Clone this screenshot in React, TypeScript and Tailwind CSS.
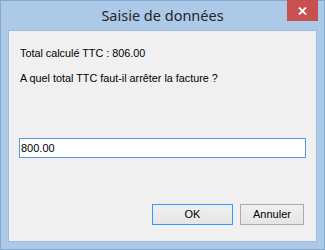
export default function App() {
  return (
    <div className="w-[325px] h-[250px] bg-[#acc9e8] border border-[#85a7d0] flex flex-col font-['Liberation_Sans',Arial,sans-serif]">
      {/* title bar */}
      <div className="relative h-[29px] flex items-center justify-center">
        <span className="font-['Noto_Sans',sans-serif] text-[14.5px] text-[#262626] leading-none -mt-[1px]">
          Saisie de données
        </span>
        <button className="absolute top-[-1px] right-[6px] w-[31px] h-[21px] bg-[#c75050] flex items-center justify-center">
          <svg width="9" height="8" viewBox="0 0 9 8">
            <path d="M1 0.5 L8 7.5 M8 0.5 L1 7.5" stroke="#fff" strokeWidth="1.8" />
          </svg>
        </button>
      </div>

      {/* client area */}
      <div className="mx-[7px] mb-[7px] flex-1 bg-[#f0f0f0] border border-[#9fbadb] flex flex-col text-[10.8px] leading-[13px] text-black px-[10px]">
        <p className="pl-[1px] mt-[16px]">Total calculé TTC : 806.00</p>
        <p className="pl-[1px] mt-[12px]">A quel total TTC faut-il arrêter la facture ?</p>

        <input
          defaultValue="800.00"
          className="mt-[53px] h-[20px] w-full bg-white border border-[#569de5] pl-[1px] text-[11px] text-black outline-none"
        />

        <div className="mt-[46px] flex justify-end gap-[7px] pr-[2px]">
          <button className="w-[81px] h-[21px] border border-[#3399ff] bg-gradient-to-b from-[#f0f0f0] to-[#e5e5e5] text-[11px] text-black">
            OK
          </button>
          <button className="w-[64px] h-[21px] border border-[#acacac] bg-gradient-to-b from-[#f0f0f0] to-[#e5e5e5] text-[11px] text-black">
            Annuler
          </button>
        </div>
      </div>
    </div>
  );
}
